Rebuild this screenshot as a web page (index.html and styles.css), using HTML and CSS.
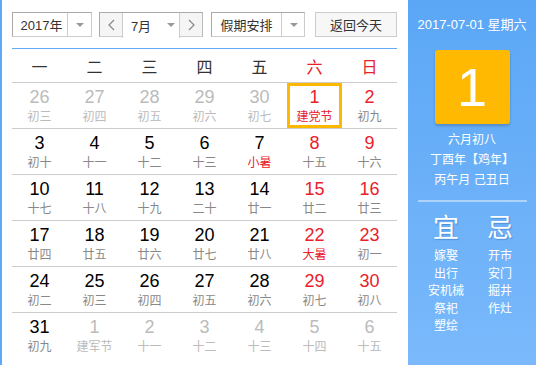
FILE: index.html
```html
<!DOCTYPE html>
<html lang="zh-CN">
<head>
  <meta charset="UTF-8">
  <meta name="viewport" content="width=device-width,initial-scale=1">
  <title>万年历</title>
  <link rel="stylesheet" href="styles.css">
</head>
<body>
  <div class="calendar">
    <div class="main">
      <div class="toolbar">
        <div class="select year"><span class="val">2017年</span><span class="arrow"></span></div>
        <div class="month-group">
          <span class="nav-btn"><svg width="7" height="12" viewBox="0 0 7 12"><path d="M6 1 L1 6 L6 11" fill="none" stroke="#888" stroke-width="1.2"/></svg></span>
          <div class="select month"><span class="val">7月</span><span class="arrow"></span></div>
          <span class="nav-btn"><svg width="7" height="12" viewBox="0 0 7 12"><path d="M1 1 L6 6 L1 11" fill="none" stroke="#888" stroke-width="1.2"/></svg></span>
        </div>
        <div class="select holiday"><span class="val">假期安排</span><span class="arrow"></span></div>
        <button type="button" class="today-btn">返回今天</button>
      </div>

      <div class="week">
        <span>一</span><span>二</span><span>三</span><span>四</span><span>五</span>
        <span class="red">六</span><span class="red">日</span>
      </div>

      <div class="days">
        <div class="row">
          <div class="day other"><b>26</b><i>初三</i></div>
          <div class="day other"><b>27</b><i>初四</i></div>
          <div class="day other"><b>28</b><i>初五</i></div>
          <div class="day other"><b>29</b><i>初六</i></div>
          <div class="day other"><b>30</b><i>初七</i></div>
          <div class="day wkend selected"><b>1</b><i class="fest">建党节</i></div>
          <div class="day wkend"><b>2</b><i>初九</i></div>
        </div>
        <div class="row">
          <div class="day"><b>3</b><i>初十</i></div>
          <div class="day"><b>4</b><i>十一</i></div>
          <div class="day"><b>5</b><i>十二</i></div>
          <div class="day"><b>6</b><i>十三</i></div>
          <div class="day"><b>7</b><i class="fest">小暑</i></div>
          <div class="day wkend"><b>8</b><i>十五</i></div>
          <div class="day wkend"><b>9</b><i>十六</i></div>
        </div>
        <div class="row">
          <div class="day"><b>10</b><i>十七</i></div>
          <div class="day"><b>11</b><i>十八</i></div>
          <div class="day"><b>12</b><i>十九</i></div>
          <div class="day"><b>13</b><i>二十</i></div>
          <div class="day"><b>14</b><i>廿一</i></div>
          <div class="day wkend"><b>15</b><i>廿二</i></div>
          <div class="day wkend"><b>16</b><i>廿三</i></div>
        </div>
        <div class="row">
          <div class="day"><b>17</b><i>廿四</i></div>
          <div class="day"><b>18</b><i>廿五</i></div>
          <div class="day"><b>19</b><i>廿六</i></div>
          <div class="day"><b>20</b><i>廿七</i></div>
          <div class="day"><b>21</b><i>廿八</i></div>
          <div class="day wkend"><b>22</b><i class="fest">大暑</i></div>
          <div class="day wkend"><b>23</b><i>初一</i></div>
        </div>
        <div class="row">
          <div class="day"><b>24</b><i>初二</i></div>
          <div class="day"><b>25</b><i>初三</i></div>
          <div class="day"><b>26</b><i>初四</i></div>
          <div class="day"><b>27</b><i>初五</i></div>
          <div class="day"><b>28</b><i>初六</i></div>
          <div class="day wkend"><b>29</b><i>初七</i></div>
          <div class="day wkend"><b>30</b><i>初八</i></div>
        </div>
        <div class="row last">
          <div class="day"><b>31</b><i>初九</i></div>
          <div class="day other"><b>1</b><i>建军节</i></div>
          <div class="day other"><b>2</b><i>十一</i></div>
          <div class="day other"><b>3</b><i>十二</i></div>
          <div class="day other"><b>4</b><i>十三</i></div>
          <div class="day other"><b>5</b><i>十四</i></div>
          <div class="day other"><b>6</b><i>十五</i></div>
        </div>
      </div>
    </div>

    <div class="side">
      <div class="side-date">2017-07-01 星期六</div>
      <div class="big-day">1</div>
      <div class="lunar">
        <p>六月初八</p>
        <p>丁酉年【鸡年】</p>
        <p>丙午月 己丑日</p>
      </div>
      <div class="sep"></div>
      <div class="yiji">
        <div class="col">
          <h3>宜</h3>
          <p>嫁娶</p><p>出行</p><p>安机械</p><p>祭祀</p><p>塑绘</p>
        </div>
        <div class="col">
          <h3>忌</h3>
          <p>开市</p><p>安门</p><p>掘井</p><p>作灶</p>
        </div>
      </div>
    </div>
  </div>
</body>
</html>
```

FILE: styles.css
```css
body { margin:0; font-family:"Liberation Sans", "Noto Sans CJK SC", sans-serif; color:#333; background:#fff; }
.calendar { display:flex; width:536px; height:365px; overflow:hidden; }

.main { border-left:2px solid #5ea9f6; padding:12px 0 0 10px; box-sizing:border-box; width:408px; }
.toolbar { display:flex; height:25px; width:385px; border-bottom:1px solid #62abf6; padding-bottom:11px; }
.select { display:flex; height:25px; box-sizing:border-box; border:1px solid #aaa; border-right-color:#ccc; border-bottom-color:#ccc; font-size:13px; background:#fff; }
.select .val { flex:1; display:flex; align-items:center; justify-content:center; }
.select .arrow { width:23px; border-left:1px solid #ccc; position:relative; }
.select .arrow::after { content:""; position:absolute; left:8px; top:10px; border:4px solid transparent; border-top:4px solid #999; border-bottom:0; }
.year { width:80px; }
.year .val { padding-left:3px; }
.month-group { display:flex; margin-left:7px; width:104px; height:25px; box-sizing:border-box; border:1px solid #aaa; border-right-color:#bbb; border-bottom-color:#ccc; }
.nav-btn { width:22px; display:flex; align-items:center; justify-content:center; background:#f5f5f5; }
.month { flex:1; border:none; border-left:1px solid #ccc; border-right:1px solid #ccc; }
.month .arrow { border-left:none; width:20px; }
.holiday { width:94px; margin-left:8px; }
.holiday .arrow { width:22px; }
.today-btn { margin-left:10px; width:82px; height:25px; border:1px solid #ccc; background:#f7f7f7; font-family:inherit; font-size:13px; color:#333; padding:0; }

.week { display:grid; grid-template-columns:repeat(7, 55px); width:385px; height:33px; border-bottom:1px solid #ccc; font-size:16px; }
.week span { display:flex; align-items:center; justify-content:center; }
.red { color:#e8212b; }

.row { display:grid; grid-template-columns:repeat(7, 55px); width:385px; height:45px; border-bottom:1px solid #ccc; }
.row.last { border-bottom:none; }
.day { display:flex; flex-direction:column; align-items:center; padding-top:3px; }
.day b { font-weight:normal; font-size:18px; line-height:22px; color:#000; }
.day i { font-style:normal; font-size:12px; line-height:18px; color:#888; }
.day.wkend b { color:#e8212b; }
.day i.fest { color:#e8212b; }
.day.other b { color:#bbb; }
.day.other i { color:#bbb; }
.day.selected { box-shadow:inset 0 0 0 3px #ffb800; }

.side { width:128px; flex:none; background:linear-gradient(#5ba7f6, #7ab9fb); color:#fff; text-align:center; padding-top:16px; box-sizing:border-box; }
.side-date { font-size:13px; line-height:18px; }
.big-day { width:75px; height:74px; margin:16px auto 0; background:#ffb900; border-radius:3px; box-shadow:0 2px 3px rgba(0,0,0,0.2); font-size:54px; line-height:74px; }
.lunar { margin-top:6px; }
.lunar p { margin:0; font-size:12px; line-height:20px; }
.sep { height:2px; background:rgba(255,255,255,0.45); margin:10px 9px 0 10px; }
.yiji { display:flex; padding:11px 9px 0 11px; }
.yiji .col { flex:1; }
.yiji h3 { margin:0 0 5px; font-size:26px; line-height:30px; font-weight:normal; text-shadow:1px 1px 1px rgba(0,60,140,0.3); }
.yiji p { margin:0; font-size:12px; line-height:17.6px; }
```
